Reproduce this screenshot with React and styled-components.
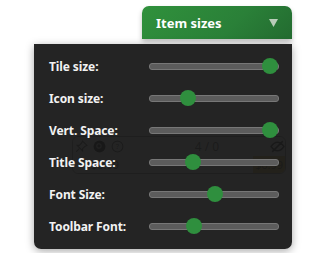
import React from 'react';
import styled, { createGlobalStyle } from 'styled-components';

const GlobalStyle = createGlobalStyle`
    html, body {
        margin: 0;
        padding: 0;
        background: #ffffff;
        font-family: "Noto Sans", "Open Sans", sans-serif;
    }
`

const Page = styled.div`
    position: relative;
    width: 310px;
    height: 253px;
    overflow: hidden;
    background: #ffffff;
    padding: 136px 0 0 72px;
    box-sizing: border-box;
`

const ItemCard = styled.div`
    width: 214px;
    height: 38px;
    border: 1px solid #8a8a8a;
    border-radius: 6px;
    box-sizing: border-box;
    display: flex;
    flex-direction: column;
`

const CardBar = styled.div`
    display: flex;
    align-items: center;
    gap: 5px;
    height: 20px;
    padding: 0 0 0 2px;
    color: #555;
`

const CardCount = styled.span`
    flex: 1;
    text-align: center;
    font-size: 12px;
    padding-left: 20px;
`

const CardPrices = styled.div`
    display: flex;
    justify-content: space-between;
    align-items: center;
    padding-left: 16px;
    font-size: 11px;
    color: #444;
`

const Price = styled.span`
    padding: 1px 2px;
    border-radius: 0 0 5px 0;
    background: ${props => props.highlight ? '#e8c94a' : 'transparent'};
`

const Menu = styled.div`
    position: absolute;
    left: 34px;
    top: 6px;
    width: 258px;
    display: flex;
    flex-direction: column;
    align-items: flex-end;
`

const Tab = styled.div`
    width: 150px;
    height: 33px;
    box-sizing: border-box;
    padding: 0 14px;
    display: flex;
    align-items: center;
    justify-content: space-between;
    background: linear-gradient(135deg, #30913c 0%, #2a8038 60%, #236b30 100%);
    border-radius: 7px 7px 0 0;
    box-shadow: 0 3px 5px rgba(0, 0, 0, 0.25);
    color: #ffffff;
    font-weight: 700;
    font-size: 13px;
    margin-bottom: 5px;
`

const Panel = styled.div`
    align-self: stretch;
    background: rgba(24, 24, 24, 0.95);
    border-radius: 0 0 7px 7px;
    box-shadow: 0 2px 9px rgba(0, 0, 0, 0.35);
    padding: 6px 13px 7px 15px;
    display: grid;
    grid-template-columns: 100px 1fr;
    grid-auto-rows: 32px;
    align-items: center;
`

const Label = styled.span`
    color: #f2f2f2;
    font-weight: 700;
    font-size: 12px;
    letter-spacing: -0.1px;
`

const Track = styled.div`
    position: relative;
    height: 5px;
    border-radius: 3px;
    background: #5c5c5c;
    border: 1px solid #777;
`

const Thumb = styled.div`
    position: absolute;
    top: 50%;
    width: 16px;
    height: 16px;
    margin: -8px 0 0 -8px;
    border-radius: 50%;
    background: #2f8f3e;
`

const sliders = [
    { label: 'Tile size:', value: 1 },
    { label: 'Icon size:', value: 0.27 },
    { label: 'Vert. Space:', value: 1 },
    { label: 'Title Space:', value: 0.31 },
    { label: 'Font Size:', value: 0.51 },
    { label: 'Toolbar Font:', value: 0.32 },
];

const Slider = ({ value }) => (
    <Track>
        <Thumb style={{ left: `calc(8px + (100% - 16px) * ${value})` }} />
    </Track>
)

const App = () => (
    <Page>
        <GlobalStyle />
        <ItemCard>
            <CardBar>
                <svg width="13" height="13" viewBox="0 0 12 12" fill="none" stroke="#555" strokeWidth="1.1">
                    <path d="M7 1l4 4-2 1-2 2 0 2-5-5 2 0 2-2z M4 8l-3 3" />
                </svg>
                <svg width="13" height="13" viewBox="0 0 12 12">
                    <circle cx="6" cy="6" r="5.5" fill="#222" />
                    <circle cx="5.5" cy="5.5" r="2" fill="none" stroke="#ccc" strokeWidth="1" />
                </svg>
                <svg width="13" height="13" viewBox="0 0 12 12" fill="none" stroke="#555" strokeWidth="1">
                    <circle cx="6" cy="6" r="5" />
                    <text x="6" y="8.5" fontSize="7" textAnchor="middle" fill="#555" stroke="none">?</text>
                </svg>
                <CardCount>4 / 0</CardCount>
                <svg width="15" height="13" viewBox="0 0 14 12" fill="none" stroke="#333" strokeWidth="1.4">
                    <path d="M1 6c2-3 4-4 6-4s4 1 6 4c-2 3-4 4-6 4s-4-1-6-4z M2 11l10-10" />
                </svg>
            </CardBar>
            <CardPrices>
                <Price>$6.99</Price>
                <Price highlight>$6.99</Price>
            </CardPrices>
        </ItemCard>
        <Menu>
            <Tab>
                <span>Item sizes</span>
                <svg width="9" height="8" viewBox="0 0 9 8">
                    <polygon points="0,0 9,0 4.5,8" fill="#b9cdb9" />
                </svg>
            </Tab>
            <Panel>
                {sliders.map(s => (
                    <React.Fragment key={s.label}>
                        <Label>{s.label}</Label>
                        <Slider value={s.value} />
                    </React.Fragment>
                ))}
            </Panel>
        </Menu>
    </Page>
)

export default App;
